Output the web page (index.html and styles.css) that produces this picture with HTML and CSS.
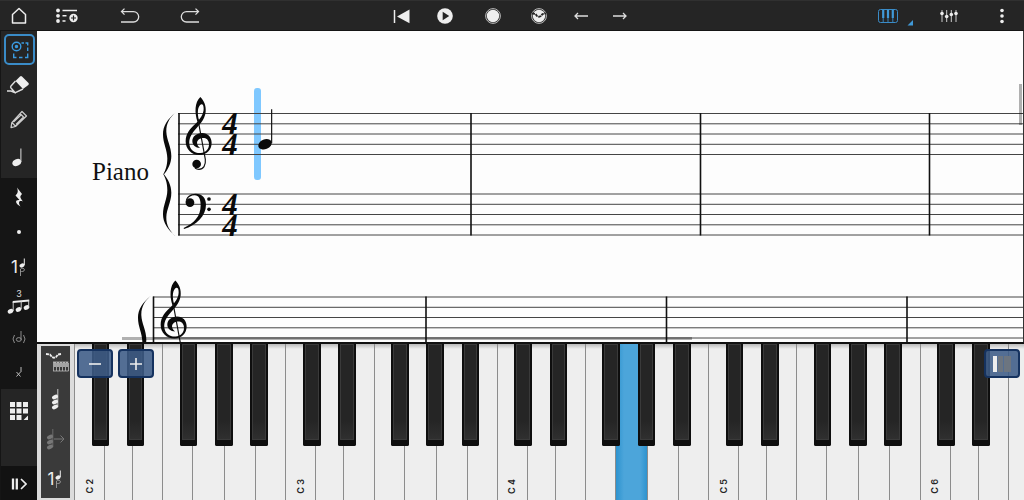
FILE: index.html
```html
<!DOCTYPE html>
<html lang="en">
<head>
    <meta charset="UTF-8">
    <meta name="viewport" content="width=device-width, initial-scale=1.0">
    <title>Score Editor</title>
    <link rel="stylesheet" href="styles.css">
</head>
<body>
    <!-- Shared note symbols -->
    <svg class="defs" width="0" height="0">
        <symbol id="voice-note" viewBox="0 0 8 20">
            <ellipse cx="3" cy="8.500" rx="2.600" ry="2" transform="rotate(-25 3 8.500)" fill="currentColor"/>
            <path d="M5.300 8V1.500" stroke="currentColor"/>
            <path d="M1.500 19v-7c1-1 4-1 4 .8s-3 2-4 1.500" stroke="#aaa" fill="none" stroke-width=".8"/>
        </symbol>
        <symbol id="chord" viewBox="0 0 10 22">
            <g fill="currentColor">
                <ellipse cx="4" cy="9" rx="3.200" ry="2" transform="rotate(-25 4 9)"/>
                <ellipse cx="4" cy="14" rx="3.200" ry="2" transform="rotate(-25 4 14)"/>
                <ellipse cx="4" cy="19" rx="3.200" ry="2" transform="rotate(-25 4 19)"/>
            </g>
            <path d="M6.800 19V1" stroke="currentColor" stroke-width=".8"/>
        </symbol>
    </svg>

    <header class="toolbar">
        <div class="group">
            <button class="tool home" aria-label="Home">
                <svg width="16" height="18" fill="none" stroke="#eee" stroke-width="1.500"><path d="M1.500 7.500 8 1.500l6.500 6V16h-13z" stroke-linejoin="round"/></svg>
            </button>
            <button class="tool list" aria-label="Add to list">
                <svg width="22" height="16">
                    <g fill="#eee"><circle cx="2" cy="2.500" r="1.900"/><circle cx="2" cy="7.800" r="1.900"/><circle cx="2" cy="13" r="1.900"/><circle cx="17.500" cy="10" r="4.200"/></g>
                    <path d="M6.500 2.500H21M6.500 7.800h4M6.500 13h3" stroke="#eee" stroke-width="1.600"/>
                    <path d="M17.500 7.500v5M15 10h5" stroke="#252525" stroke-width="1.200"/>
                </svg>
            </button>
            <button class="tool undo" aria-label="Undo">
                <svg width="20" height="16" fill="none" stroke="#ddd" stroke-width="1.300"><path d="M1 14h12.500a5.200 5.200 0 0 0 0-10.400H1.500M4.500 .6 1.500 3.600l3 3"/></svg>
            </button>
            <button class="tool redo" aria-label="Redo">
                <svg width="20" height="16" fill="none" stroke="#ddd" stroke-width="1.300"><path d="M19 14H6.500a5.200 5.200 0 0 1 0-10.400h12M15.500 .6l3 3-3 3"/></svg>
            </button>
        </div>
        <div class="group">
            <button class="tool rewind" aria-label="Back to start">
                <svg width="17" height="15"><path d="M1.500 1v13" stroke="#eee" stroke-width="1.500"/><path d="M16.500 .5v13.800L4 7.500z" fill="#eee"/></svg>
            </button>
            <button class="tool play" aria-label="Play">
                <svg width="16" height="16"><circle cx="8" cy="8" r="7.800" fill="#eee"/><path d="M5.700 3.800v8.400l6.500-4.200z" fill="#252525"/></svg>
            </button>
            <button class="tool record" aria-label="Record">
                <svg width="16" height="16"><circle cx="8" cy="8" r="7.400" fill="none" stroke="#ccc" stroke-width=".9"/><circle cx="8" cy="8" r="6.200" fill="#eee"/></svg>
            </button>
            <button class="tool metronome" aria-label="Record with velocity">
                <svg width="16" height="16"><circle cx="8" cy="8" r="7.400" fill="none" stroke="#ccc" stroke-width=".9"/><circle cx="8" cy="8" r="6.200" fill="#eee"/><path d="M1 5.500 4.500 6 6 8l2 .8L10 8l1.500-2 3.500-.5" fill="none" stroke="#252525" stroke-width="1.800" stroke-dasharray="3 .7"/></svg>
            </button>
            <button class="tool prev" aria-label="Previous">
                <svg width="14" height="10" fill="none" stroke="#ddd" stroke-width="1.300"><path d="M14 5H1.500M4 2 1 5l3 3"/></svg>
            </button>
            <button class="tool next" aria-label="Next">
                <svg width="14" height="10" fill="none" stroke="#ddd" stroke-width="1.300"><path d="M0 5h12.500M10 2l3 3-3 3"/></svg>
            </button>
        </div>
        <div class="group group-right">
            <button class="tool keys" aria-label="Keyboard">
                <svg width="62" height="30">
                    <rect x="22.500" y="8.500" width="19" height="13" rx="2" fill="none" stroke="#3a8cc8"/>
                    <path d="M27.200 9v8M32 9v8M36.800 9v8" stroke="#4099d8" stroke-width="2.200"/>
                    <path d="M27.200 17v4.500M32 17v4.500M36.800 17v4.500" stroke="#3a8cc8" stroke-width=".9"/>
                    <path d="M57 19v5.500h-5.500z" fill="#4099d8"/>
                </svg>
            </button>
            <button class="tool mixer" aria-label="Mixer">
                <svg width="18" height="14"><path d="M2 1v12M6.700 1v12M11.300 1v12M16 1v12" stroke="#ccc"/><g fill="#eee"><circle cx="2" cy="4.500" r="1.800"/><circle cx="6.700" cy="7.500" r="1.800"/><circle cx="11.300" cy="5.500" r="1.800"/><circle cx="16" cy="4.500" r="1.800"/></g></svg>
            </button>
            <button class="tool more" aria-label="More">
                <svg width="4" height="16" fill="#eee"><circle cx="2" cy="2.500" r="1.800"/><circle cx="2" cy="8" r="1.800"/><circle cx="2" cy="13.500" r="1.800"/></svg>
            </button>
        </div>
    </header>

    <div class="main">
        <nav class="sidebar">
            <div class="tools">
                <button class="side active" aria-label="Select">
                    <svg width="18" height="18" fill="none" stroke="#3a9ae0" stroke-width="1.400"><circle cx="5.500" cy="5.500" r="4.300"/><circle cx="5.500" cy="5.500" r="1" fill="#3a9ae0"/><path d="M10.500 2h2.500M14.500 2h2.200v2.500M16.700 6.500v3.500M16.700 12.500v4h-2.700M11.500 16.500H8M5.500 16.500H2.700v-4"/></svg>
                </button>
                <button class="side erase" aria-label="Erase">
                    <svg width="24" height="20"><path d="M13 1.500q1-1 2 0L21.500 8q.8 1-.2 2L16 14 8.500 6z" fill="#eee"/><path d="m8.500 6-4.500 5q-.8 1 0 2l3.500 4q1 1 2 0L16 14M0 16h4l5 2" fill="none" stroke="#ddd" stroke-width="1.400"/></svg>
                </button>
                <button class="side write" aria-label="Write">
                    <svg width="20" height="20" fill="none" stroke="#ccc" stroke-width="1.200"><path d="m13 1.500 4.500 4.500-11 10.500-4.500 1.200.8-5zM3 12.500l3.700 4M11 3.500l4.500 4.500M4.500 12 12 5M7 14.500l7-7" stroke-linejoin="round"/></svg>
                </button>
                <button class="side quarter" aria-label="Quarter note">
                    <svg width="14" height="20"><ellipse cx="4.800" cy="15.500" rx="4.600" ry="3.300" transform="rotate(-25 4.800 15.500)" fill="#eee"/><path d="M8.900 15V1.500" stroke="#ddd"/></svg>
                </button>
            </div>
            <div class="notes">
                <button class="side" aria-label="Rest">
                    <svg width="10" height="20"><path d="m3 .5 5 6.500C5.500 9.500 6 10.500 9 14.500 5.500 13 3.500 15 6.500 19.500.5 16 1 12.500 5.500 13L1.500 8.500c2.700-2.500 2.700-4.500 1.500-8z" fill="#eee"/></svg>
                </button>
                <button class="side" aria-label="Dot"><svg width="6" height="6"><circle cx="3" cy="3" r="2" fill="#eee"/></svg></button>
                <button class="side voice">1<svg width="8" height="20"><use href="#voice-note"/></svg></button>
                <button class="side triplet">
                    <span>3</span>
                    <svg width="24" height="15"><g fill="#eee"><ellipse cx="3.500" cy="12.300" rx="2.900" ry="2.200" transform="rotate(-25 3.500 12.300)"/><ellipse cx="11.500" cy="10.500" rx="2.900" ry="2.200" transform="rotate(-25 11.500 10.500)"/><ellipse cx="19.500" cy="8.500" rx="2.900" ry="2.200" transform="rotate(-25 19.500 8.500)"/><path d="M5.700 2l16.500-1.500v2L5.700 4z"/></g><path d="M6.200 12V3M14.200 10V2M21.700 8.500V1" stroke="#ddd" stroke-width=".9"/></svg>
                </button>
                <button class="side" aria-label="Ghost note">
                    <svg width="14" height="16" fill="none" stroke="#999" stroke-width=".9"><path d="M2.500 6q-3 4 0 8M11.500 6q3 4 0 8M9 11V2"/><ellipse cx="6.800" cy="10.500" rx="2.500" ry="1.900"/></svg>
                </button>
                <button class="side" aria-label="Cross note">
                    <svg width="8" height="12" stroke="#bbb"><path d="m1.500 6 4 4.500M1.500 10.500l4-4.500M6 6V1"/></svg>
                </button>
            </div>
            <button class="side palette" aria-label="Palette">
                <svg width="18" height="18" fill="#eee"><path d="M0 0h5v5H0zM6.500 0h5v5h-5zM13 0h5v5h-5zM0 6.500h5v5H0zM6.500 6.500h5v5h-5zM13 6.500h5v5h-5zM0 13h5v5H0zM6.500 13h5v5h-5zM18 13.500V18h-4.500z"/></svg>
            </button>
            <button class="side expand" aria-label="Expand">
                <svg width="16" height="12"><path d="M2 .5v11M5.800 .5v11" stroke="#eee" stroke-width="2.300"/><path d="m10 1 5 5-5 5" fill="none" stroke="#eee" stroke-width="1.600"/></svg>
            </button>
        </nav>

        <div class="workspace">
            <section class="score">
                <svg class="sheet" width="100%" height="100%">
                    <defs>
                        <g id="treble">
                            <path d="M353 127C343 98 344 67 361 51C373 63 379 79 377 96C374 121 356 136 344 151C332 166 327 177 328 192C330 211 345 220 362 219C378 217 388 206 387 191C386 178 377 173 368 174C356 175 349 184 352 193C353 198 358 202 360 204C347 204 337 195 337 183C337 170 349 159 366 159C384 159 395 172 395 188C395 210 380 224 358 225C334 225 317 208 317 184C317 160 332 145 345 133C360 117 371 103 371 86C371 76 368 72 364 73C353 78 351 98 357 121Z"/>
                            <path d="M354 118 376 238C378 256 370 268 357 268Q350 268 345 264" fill="none" stroke="#111" stroke-width="3.500"/>
                            <circle cx="350" cy="252" r="13"/>
                        </g>
                        <path id="brace" d="M288 96C262 118 249 138 249 163C249 190 262 210 262 235C262 258 256 272 250 283C256 294 262 308 262 331C262 356 249 376 249 403C249 428 262 448 288 470C270 454 258 436 259 411C260 386 274 366 274 338C274 316 264 298 252 283C264 268 274 250 274 228C274 200 260 180 259 155C258 130 270 112 288 96Z"/>
                        <path id="staff" d="M0 0H3000M0 10.300H3000M0 20.500H3000M0 30.800H3000M0 41H3000"/>
                    </defs>

                    <!-- First system -->
                    <rect x="217" y="57" width="7" height="92" rx="3" fill="#7fc8ff"/>
                    <g stroke="#444" stroke-width="1">
                        <use href="#staff" x="141" y="82.500"/>
                        <use href="#staff" x="141" y="163"/>
                    </g>
                    <path d="M142 82v122.500M434 82v122.500M663.500 82v122.500M892.500 82v122.500" stroke="#111" stroke-width="1.600"/>
                    <g transform="translate(43 49) scale(.3333)" fill="#0a0a0a">
                        <use href="#brace"/>
                        <use href="#treble"/>
                        <path d="M317 368C317 350 330 341 347 341C367 341 378 354 378 374C378 408 348 436 312 447L311 444C342 430 362 410 362 376C362 358 357 346 344 346C334 346 325 351 322 358Z"/>
                        <circle cx="330" cy="368" r="13"/>
                        <circle cx="387" cy="357" r="5.500"/>
                        <circle cx="387" cy="388" r="5.500"/>
                        <ellipse cx="555" cy="193" rx="21" ry="14.500" transform="rotate(-22 555 193)"/>
                        <path d="M575 88v102" stroke="#111" stroke-width="3.500"/>
                    </g>
                    <g class="meter">
                        <text x="193" y="103">4</text><text x="193" y="124">4</text>
                        <text x="193" y="184">4</text><text x="193" y="205">4</text>
                    </g>
                    <text class="instrument" x="55" y="149">Piano</text>

                    <!-- Second system -->
                    <use href="#staff" x="116" y="266" stroke="#444"/>
                    <path d="M116.500 265.500V320M389 265.500V320M629.500 265.500V320M870 265.500V320" stroke="#111" stroke-width="1.600"/>
                    <g transform="translate(18 232.500) scale(.3333)" fill="#0a0a0a">
                        <use href="#brace"/>
                        <use href="#treble"/>
                    </g>
                </svg>
                <div class="scroll-y"></div>
                <div class="scroll-x"></div>
            </section>

            <section class="piano">
                <div class="panel">
                    <button class="option velocity" aria-label="Velocity">
                        <svg width="24" height="22"><path d="m1 3 4 .5L7 6l2 .8L11 6l2-2.500 3-.5" fill="none" stroke="#eee" stroke-width="1.800" stroke-dasharray="3 .7"/><path d="M8 11h15.500M8 20h15.500M8.500 11v9M11.500 12v8M14.500 12v8M17.500 12v8M20.500 12v8M23.500 12v8" stroke="#bbb" stroke-width=".8"/><path d="M10 11v5M13 11v5M16 11v5M19 11v5M22 11v5" stroke="#ddd" stroke-width="1.300"/></svg>
                    </button>
                    <button class="option" aria-label="Chord"><svg width="10" height="22"><use href="#chord"/></svg></button>
                    <button class="option dim" aria-label="Chord advance">
                        <svg width="20" height="22"><use href="#chord" width="10" height="22"/><path d="M8 11h10M14.500 7.500l3.500 3.500-3.500 3.500" fill="none" stroke="currentColor"/></svg>
                    </button>
                    <button class="option voice">1<svg width="8" height="20"><use href="#voice-note"/></svg></button>
                </div>
                <div class="keyboard" id="keyboard"></div>
                <div class="zoom">
                    <button class="pill" aria-label="Zoom out"><svg width="12" height="12"><path d="M0 6h12" stroke="#eee" stroke-width="1.600"/></svg></button>
                    <button class="pill" aria-label="Zoom in"><svg width="12" height="12"><path d="M0 6h12M6 0v12" stroke="#eee" stroke-width="1.600"/></svg></button>
                    <button class="pill split" aria-label="Key width"><svg width="20" height="16"><path d="M1 0h4v16H1z" fill="#eee"/><path d="M6 0h5v16H6zM12 0h7v16h-7z" fill="#6c7580"/></svg></button>
                </div>
            </section>
        </div>
    </div>

    <script>
        const whites = ['C', 'D', 'E', 'F', 'G', 'A', 'B'];
        const blacks = ['cs', 'ds', 'fs', 'gs', 'as'];
        const pressed = 'G4';

        const keyboard = document.getElementById('keyboard');

        // Five octaves, the last one runs off the right edge
        for (let oct = 2; oct <= 6; oct++) {
            const white = whites.map(n => {
                const on = n + oct === pressed ? ' pressed' : '';
                const label = n === 'C' ? `<span>C ${oct}</span>` : '';
                return `<button class="white${on}" aria-label="${n}${oct}">${label}</button>`;
            }).join('');
            const black = blacks.map(n => `<button class="black ${n}" aria-label="${n}${oct}"></button>`).join('');
            keyboard.innerHTML += `<div class="octave"><div class="whites">${white}</div><div class="blacks">${black}</div></div>`;
        }
    </script>
</body>
</html>
```

FILE: styles.css
```css
* {
    margin: 0;
    padding: 0;
    box-sizing: border-box;
}

body {
    font-family: Inter, "Liberation Sans", sans-serif;
    background: #252525;
    color: #eee;
    height: 100vh;
    display: flex;
    flex-direction: column;
    overflow: hidden;
}

button {
    border: none;
    background: none;
    color: inherit;
    font-family: inherit;
    cursor: pointer;
    display: flex;
    align-items: center;
    justify-content: center;
}

.defs {
    position: absolute;
}

svg {
    display: block;
}

/* Top toolbar */
.toolbar {
    height: 31px;
    flex: none;
    display: grid;
    grid-template-columns: 1fr auto 1fr;
    background: #252525;
    border-top: 1px solid #303030;
    border-bottom: 1px solid #151515;
}

.group {
    display: flex;
    margin-right: 8px;
}

.group-right {
    justify-content: flex-end;
    margin-right: 0;
}

.tool {
    width: 44px;
}

.home { width: 38px; }
.list { width: 58px; }
.undo { width: 68px; }
.redo { width: 52px; }
.record { width: 52px; }
.metronome { width: 40px; }
.next { width: 34px; }
.keys, .mixer { width: 62px; }

/* Left tool column */
.main {
    flex: 1;
    display: flex;
    min-height: 0;
}

.sidebar {
    width: 37px;
    flex: none;
    display: flex;
    flex-direction: column;
    background: #252525;
    border-left: 1px solid #151515;
}

.side {
    width: 36px;
    height: 35px;
}

.tools {
    padding-top: 3px;
}

.active {
    width: 31px;
    height: 31px;
    margin: 0 auto 0 3px;
    border: 2px solid #3a8cc8;
    border-radius: 5px;
}

.erase { height: 40px; }
.write { height: 30px; }
.quarter { height: 43px; }

.notes {
    padding-top: 1px;
    background: #151515;
}

.voice {
    gap: 1px;
    font-size: 17px;
    line-height: 20px;
}

.triplet {
    flex-direction: column;
}

.triplet span {
    font-size: 9px;
    line-height: 10px;
    color: #ddd;
}

.palette {
    height: 43px;
}

.expand {
    margin-top: auto;
    height: 34px;
    padding-top: 2px;
    background: #121212;
}

/* Score */
.workspace {
    flex: 1;
    min-width: 0;
    display: flex;
    flex-direction: column;
}

.score {
    flex: 1;
    min-height: 0;
    position: relative;
    overflow: hidden;
    background: #fdfdfd;
    border-right: 1px solid #333;
}

.instrument {
    font-family: "Liberation Serif", serif;
    font-size: 25px;
    fill: #111;
}

.meter {
    font-family: "Liberation Serif", serif;
    font-weight: bold;
    font-style: italic;
    font-size: 31px;
    text-anchor: middle;
    fill: #0a0a0a;
}

.scroll-y {
    position: absolute;
    right: 1px;
    top: 53px;
    width: 3px;
    height: 41px;
    background: rgba(0, 0, 0, 0.3);
}

.scroll-x {
    position: absolute;
    left: 85px;
    bottom: 2px;
    width: 570px;
    height: 3px;
    background: rgba(0, 0, 0, 0.3);
}

/* Piano */
.piano {
    position: relative;
    flex: none;
    height: 158px;
    display: flex;
    background: #dcdcdc;
    border-top: 2px solid #111;
}

.panel {
    width: 29px;
    flex: none;
    margin: 2px 4px;
    display: grid;
    grid-template-rows: 32fr 41fr 40fr 39fr;
    background: #3a3a3a;
}

.option {
    overflow: hidden;
}

.velocity {
    padding-left: 3px;
}

.dim {
    color: #777;
}

.keyboard {
    flex: 1;
    min-width: 0;
    display: flex;
    overflow: hidden;
}

.octave {
    flex: 0 0 22.25%;
    display: grid;
}

.whites, .blacks {
    grid-area: 1 / 1;
    display: grid;
}

.whites {
    grid-template-columns: 30fr 28fr 30fr 30fr 32fr 31fr 30fr;
}

.blacks {
    grid-template-columns: repeat(12, 1fr);
    align-items: start;
    pointer-events: none;
}

.white {
    align-items: flex-end;
    padding-bottom: 6px;
    border-left: 1px solid #8c8c8c;
    background: linear-gradient(#bbb, #eee 5px, #eee);
}

.white span {
    writing-mode: vertical-rl;
    transform: rotate(180deg);
    font-size: 9px;
    font-weight: 600;
    line-height: 12px;
    color: #222;
}

.pressed {
    background: linear-gradient(to right, #2d93cf, #4ca5da 8px, #4ca5da 24px, #2d93cf);
}

.black {
    height: 102px;
    pointer-events: auto;
    background: linear-gradient(#252525 80%, #303030);
    border: 2px solid #0e0e0e;
    border-top: none;
    border-bottom-width: 6px;
    border-radius: 0 0 2px 2px;
    box-shadow: inset 0 0 0 1px #3a3a3a;
}

.cs { grid-column: 2; }
.ds { grid-column: 4; }
.fs { grid-column: 7; }
.gs { grid-column: 9; }
.as { grid-column: 11; }

/* Buttons that float over the keys */
.zoom {
    position: absolute;
    top: 5px;
    left: 40px;
    right: 4px;
    display: flex;
    gap: 5px;
    pointer-events: none;
}

.pill {
    width: 36px;
    height: 29px;
    pointer-events: auto;
    background: rgba(62, 92, 135, 0.88);
    border: 2px solid #15325f;
    border-radius: 4px;
}

.split {
    margin-left: auto;
}
```
